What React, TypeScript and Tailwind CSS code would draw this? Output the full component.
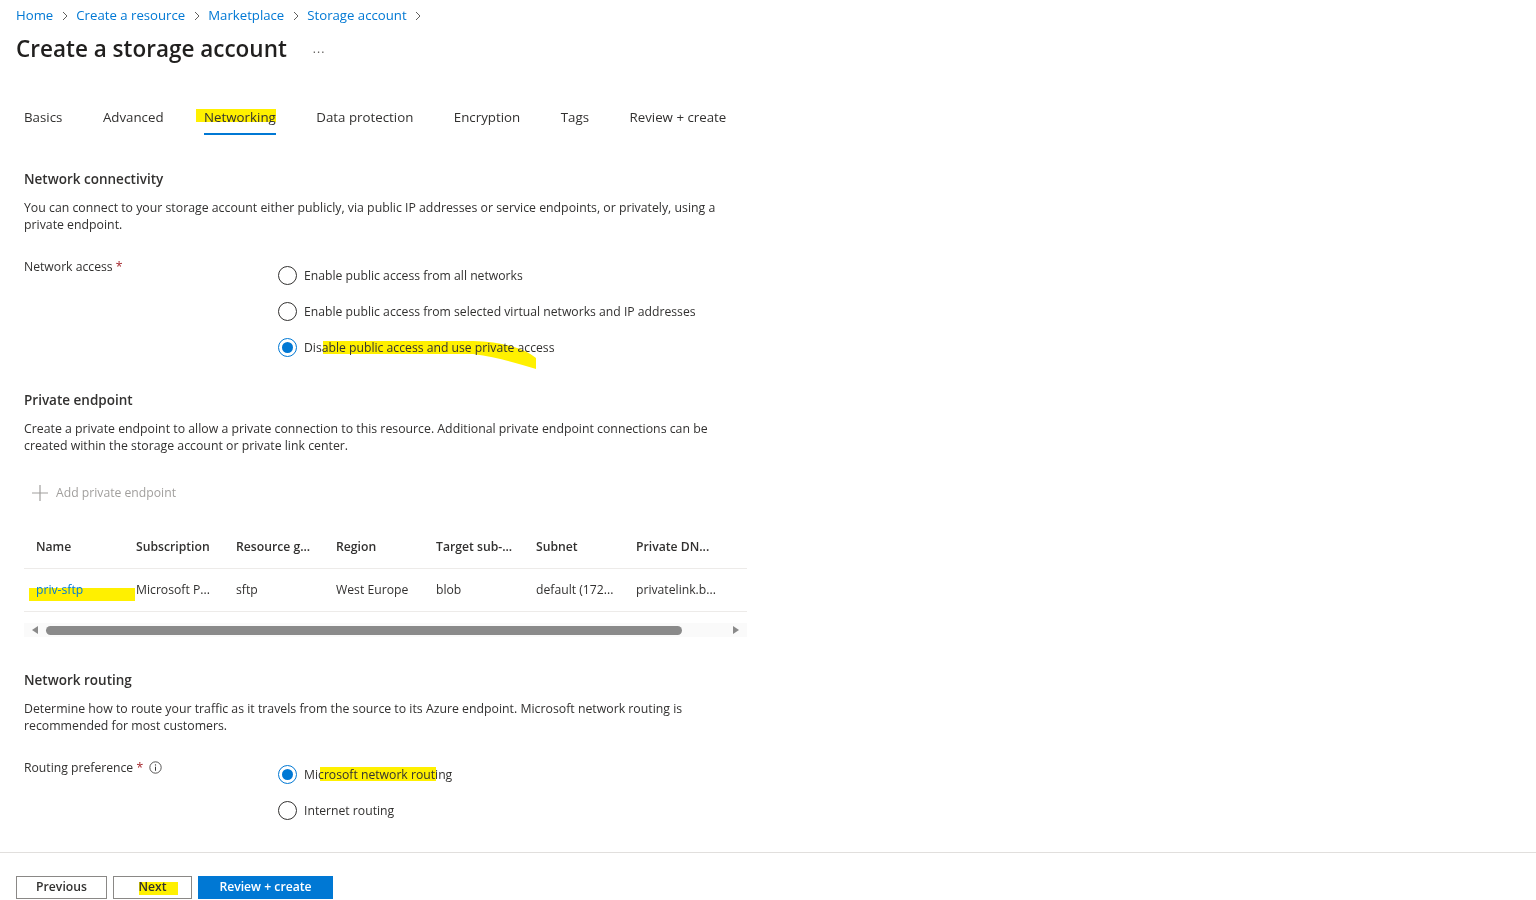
const crumbs = ["Home", "Create a resource", "Marketplace", "Storage account"];
const tabs = ["Basics", "Advanced", "Networking", "Data protection", "Encryption", "Tags", "Review + create"];
const columns = ["Name", "Subscription", "Resource g...", "Region", "Target sub-...", "Subnet", "Private DN..."];
const row = ["priv-sftp", "Microsoft P...", "sftp", "West Europe", "blob", "default (172...", "privatelink.b..."];

function Chevron() {
  return (
    <svg width="8" height="10" viewBox="0 0 8 10" className="text-[#605e5c]">
      <path d="M2 1l4 4-4 4" fill="none" stroke="currentColor" strokeWidth="1" />
    </svg>
  );
}

function Radio({ checked, label, children }: { checked?: boolean; label: string; children?: React.ReactNode }) {
  return (
    <div className="flex h-5 items-center gap-[7px]">
      <span
        className={`flex h-[19px] w-[19px] items-center justify-center rounded-full border ${
          checked ? "border-[#0078d4]" : "border-[#323130]"
        }`}
      >
        {checked && <span className="h-[11px] w-[11px] rounded-full bg-[#0078d4]" />}
      </span>
      <span className="relative text-[12.2px] leading-[17px]">
        {children}
        <span className="relative">{label}</span>
      </span>
    </div>
  );
}

function Mark({ className }: { className: string }) {
  return <span className={`pointer-events-none absolute bg-[#fff000] mix-blend-multiply ${className}`} />;
}

function Section({ title, children }: { title: string; children: React.ReactNode }) {
  return (
    <div>
      <h2 className="text-[13.5px] font-semibold leading-5">{title}</h2>
      <p className="mt-[10px] text-[12.3px] leading-[17px]">{children}</p>
    </div>
  );
}

export default function App() {
  return (
    <div className="min-h-screen bg-white font-['Open_Sans',sans-serif] text-[#323130]">
      {/* Header */}
      <div className="px-4 pt-[6px]">
        <nav className="flex h-5 items-center gap-[7.5px] text-[13.2px] text-[#0078d4]">
          {crumbs.map((c) => (
            <div key={c} className="flex items-center gap-[7.5px]">
              <span>{c}</span>
              <Chevron />
            </div>
          ))}
        </nav>
        <div className="mt-[9px] flex h-7 items-center">
          <h1 className="text-[22.5px] font-semibold leading-7 text-[#201f1e]">Create a storage account</h1>
          <span className="ml-[26px] text-[12px] tracking-[1px] text-[#605e5c]">...</span>
        </div>
      </div>

      {/* Tabs */}
      <div className="mt-[36px] flex gap-[40.5px] px-6">
        {tabs.map((t) => (
          <div key={t} className="relative flex h-[36px] flex-col justify-center">
            <span className="relative text-[13.3px] leading-5">
              {t === "Networking" && <Mark className="-left-2 top-[2px] h-[13px] w-[calc(100%+8px)]" />}
              <span className="relative">{t}</span>
            </span>
            {t === "Networking" && <span className="absolute bottom-0 left-0 h-[2px] w-full bg-[#0078d4]" />}
          </div>
        ))}
      </div>

      {/* Content */}
      <div className="px-6">
        <div className="mt-[34px]">
          <Section title="Network connectivity">
            You can connect to your storage account either publicly, via public IP addresses or service endpoints, or privately, using a
            <br />
            private endpoint.
          </Section>
        </div>

        <div className="mt-[25px] flex">
          <div className="w-[254px] text-[12.2px] leading-[17px]">
            Network access <span className="text-[#a4262c]">*</span>
          </div>
          <div className="flex flex-col gap-4 pt-[7px]">
            <Radio label="Enable public access from all networks" />
            <Radio label="Enable public access from selected virtual networks and IP addresses" />
            <Radio checked label="Disable public access and use private access">
              <svg width="220" height="32" viewBox="0 0 220 32" className="pointer-events-none absolute left-[19px] top-[1px] mix-blend-multiply">
                <path d="M0 1 L150 1 C180 2 200 8 213 18 L213 29 C195 24 175 17 150 14 L0 14 Z" fill="#fff000" />
              </svg>
            </Radio>
          </div>
        </div>

        <div className="mt-[33px]">
          <Section title="Private endpoint">
            Create a private endpoint to allow a private connection to this resource. Additional private endpoint connections can be
            <br />
            created within the storage account or private link center.
          </Section>
        </div>

        <button className="mt-[23px] flex h-8 items-center gap-2 pl-2 text-[12.2px] text-[#a19f9d]">
          <svg width="16" height="16" viewBox="0 0 16 16">
            <path d="M8 0v16M0 8h16" stroke="currentColor" strokeWidth="1.2" />
          </svg>
          Add private endpoint
        </button>

        {/* Table */}
        <div className="mt-[17px] w-[723px]">
          <div className="flex h-[43px] items-center border-b border-[#edebe9]">
            {columns.map((c) => (
              <div key={c} className="w-[100px] shrink-0 pl-3 text-[12.2px] font-semibold">
                {c}
              </div>
            ))}
          </div>
          <div className="flex h-[43px] items-center border-b border-[#edebe9]">
            {row.map((c, i) => (
              <div key={c} className="relative flex h-full w-[100px] shrink-0 items-center pl-3 text-[12.2px]">
                {i === 0 && <Mark className="left-[5px] top-[19px] h-[13px] w-[106px]" />}
                <span className={`relative ${i === 0 ? "text-[#0078d4]" : ""}`}>{c}</span>
              </div>
            ))}
          </div>
          <div className="mt-[11px] flex h-[14px] items-center gap-[8px] bg-[#fafafa] px-[8px]">
            <svg width="6" height="8" viewBox="0 0 6 8">
              <path d="M6 0 L0 4 L6 8 Z" fill="#8a8a8a" />
            </svg>
            <div className="flex-1">
              <div className="h-[9px] w-[636px] rounded-full bg-[#8a8a8a]" />
            </div>
            <svg width="6" height="8" viewBox="0 0 6 8">
              <path d="M0 0 L6 4 L0 8 Z" fill="#8a8a8a" />
            </svg>
          </div>
        </div>

        <div className="mt-[33px]">
          <Section title="Network routing">
            Determine how to route your traffic as it travels from the source to its Azure endpoint. Microsoft network routing is
            <br />
            recommended for most customers.
          </Section>
        </div>

        <div className="mt-[25px] flex">
          <div className="flex w-[254px] items-start gap-1 text-[12.2px] leading-[17px]">
            <span>
              Routing preference <span className="text-[#a4262c]">*</span>
            </span>
            <svg width="13" height="13" viewBox="0 0 16 16" className="mt-[2px] ml-[2px] text-[#323130]">
              <circle cx="8" cy="8" r="7" fill="none" stroke="currentColor" strokeWidth="1" />
              <path d="M8 7v5" stroke="currentColor" strokeWidth="1.2" />
              <circle cx="8" cy="4.8" r="0.8" fill="currentColor" />
            </svg>
          </div>
          <div className="flex flex-col gap-4 pt-[5px]">
            <Radio checked label="Microsoft network routing">
              <Mark className="left-4 top-[1px] h-[14px] w-[116px]" />
            </Radio>
            <Radio label="Internet routing" />
          </div>
        </div>
      </div>

      {/* Footer */}
      <div className="mt-[32px] flex gap-[6px] border-t border-[#e1dfdd] px-4 pt-[23px]">
        <button className="h-[23px] w-[91px] border border-[#8a8886] text-[12.2px] font-semibold">Previous</button>
        <button className="relative h-[23px] w-[79px] border border-[#8a8886] text-[12.2px] font-semibold">
          <Mark className="left-[25px] top-[5px] h-[13px] w-[39px]" />
          <span className="relative">Next</span>
        </button>
        <button className="h-[23px] w-[135px] bg-[#0078d4] text-[12.2px] font-semibold text-white">Review + create</button>
      </div>
    </div>
  );
}
